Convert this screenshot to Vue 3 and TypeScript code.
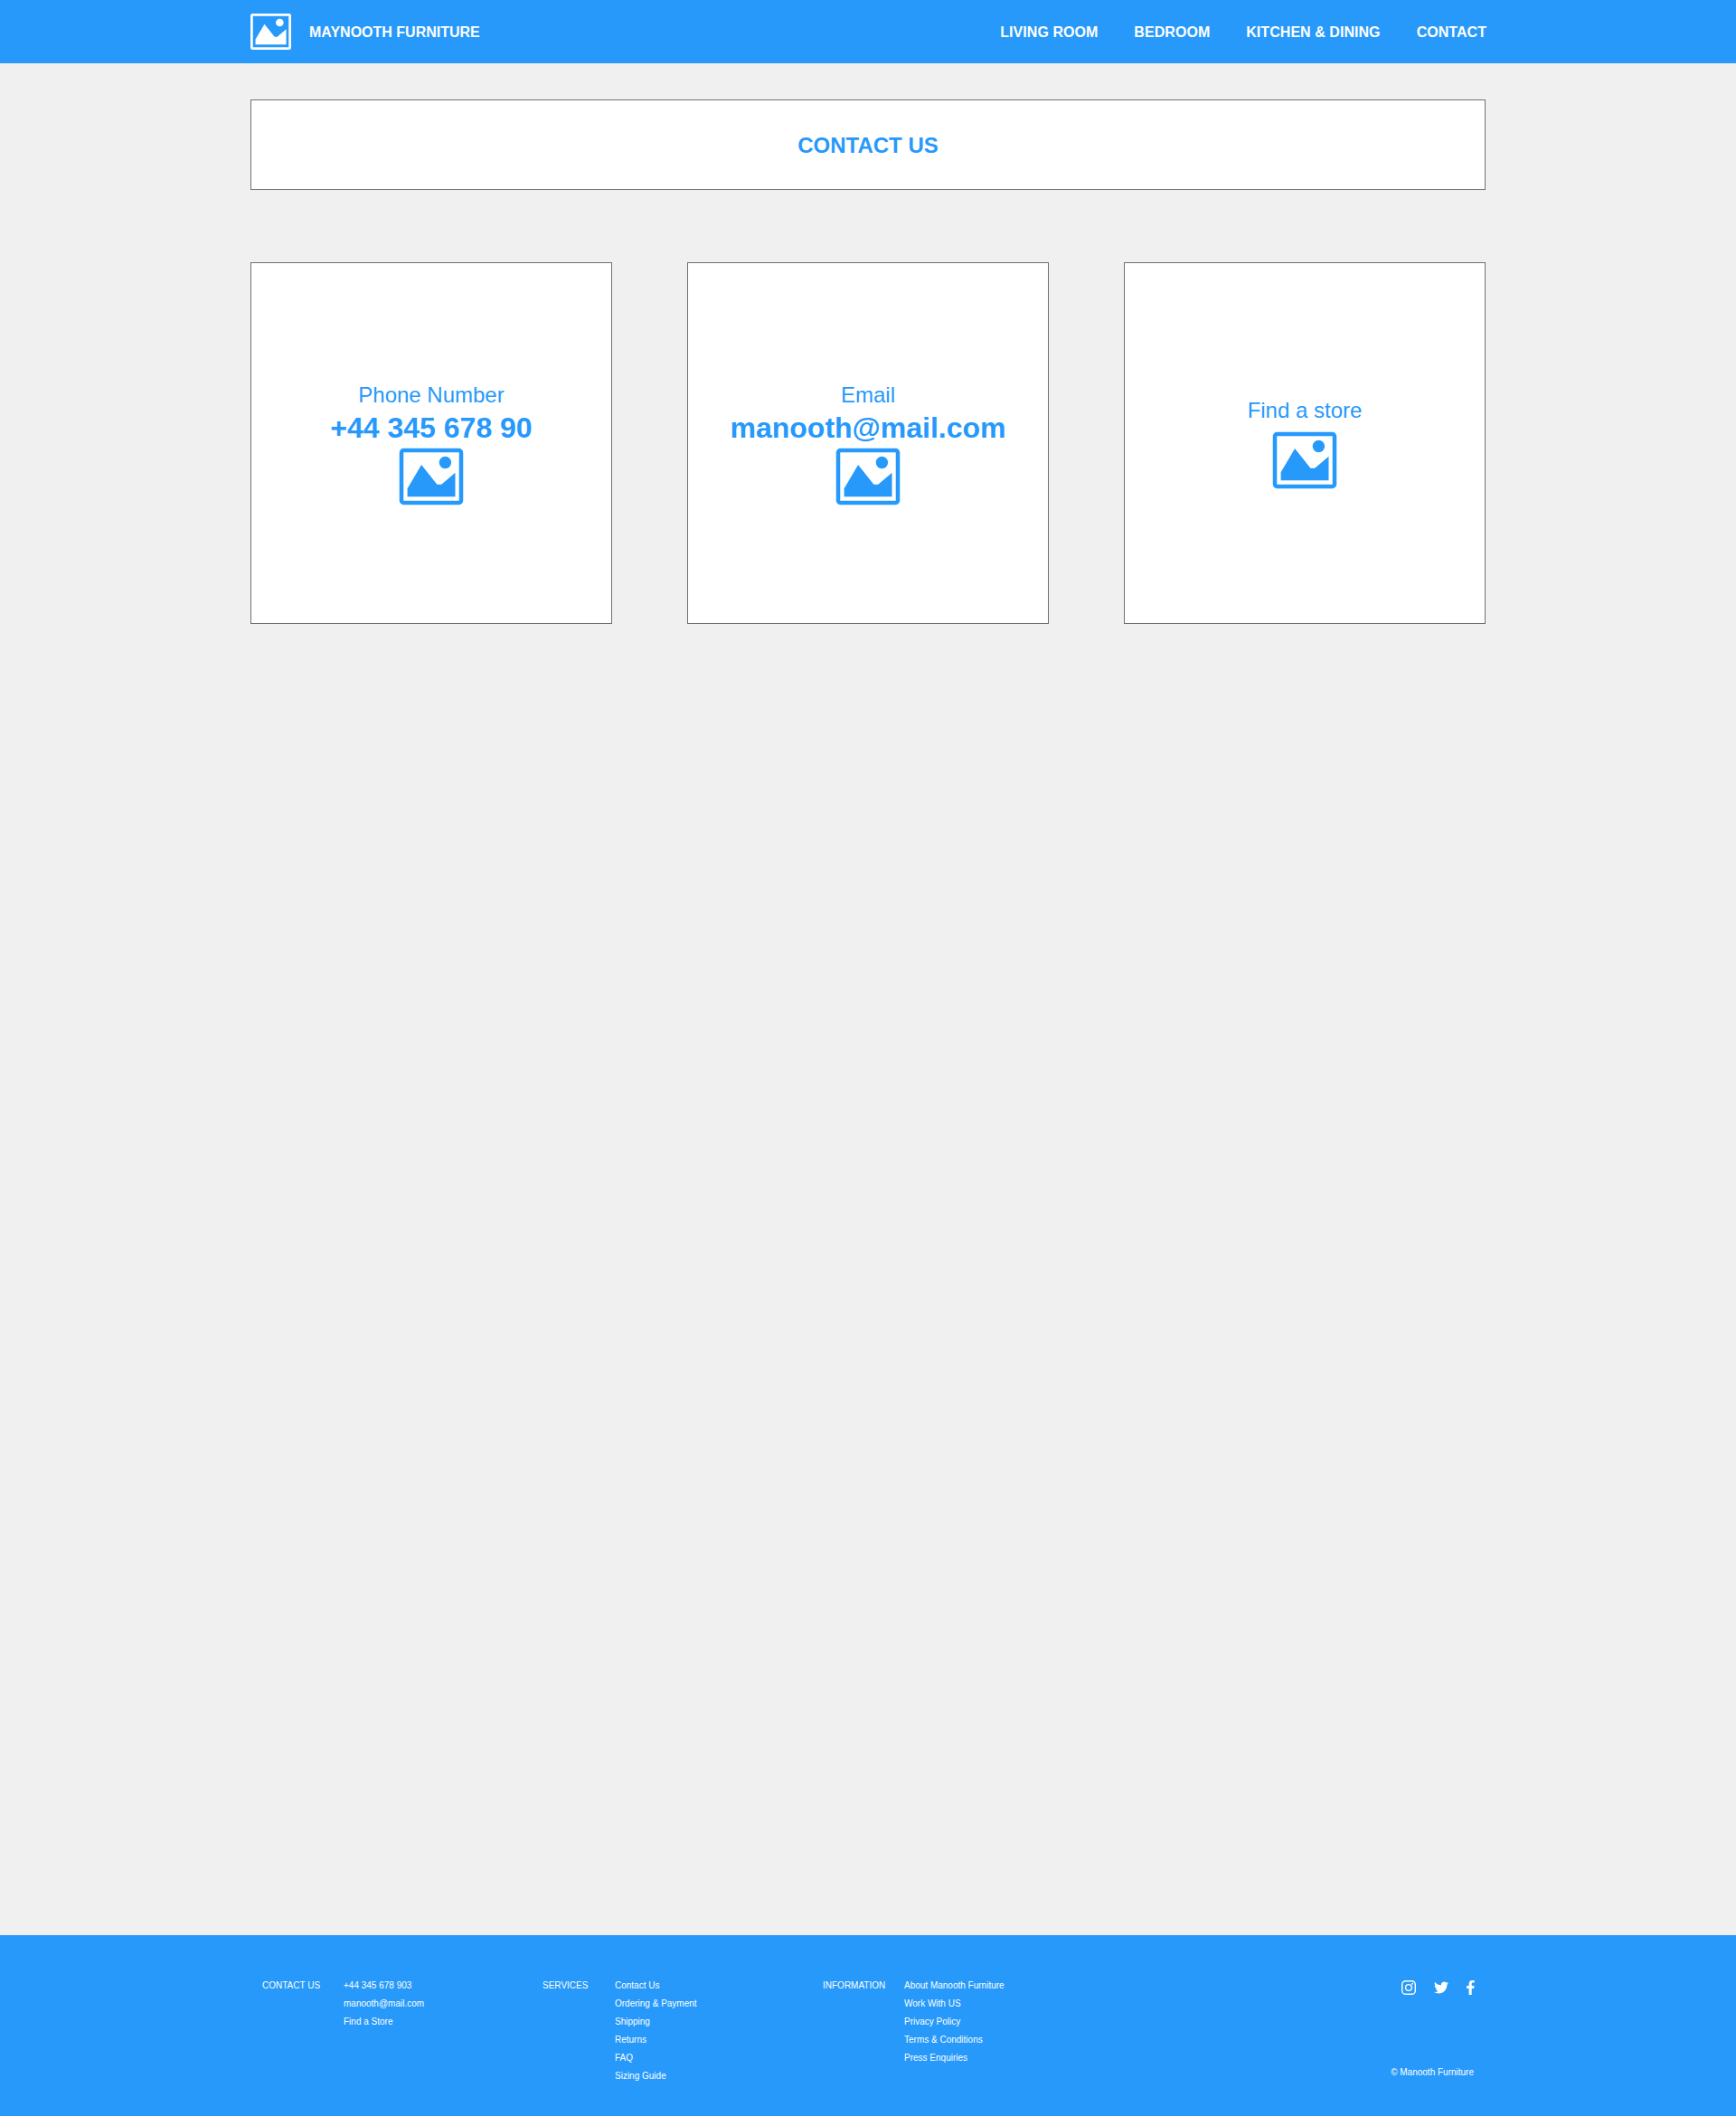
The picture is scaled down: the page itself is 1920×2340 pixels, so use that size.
<script setup lang="ts">
import { h } from 'vue'

interface ContactCard {
  label: string
  value?: string
}

interface FooterColumn {
  title: string
  key: string
  links: string[]
}

const PictureIcon = () =>
  h('svg', { viewBox: '0 0 70 62', fill: 'currentColor', 'aria-hidden': 'true' }, [
    h('rect', { x: 2, y: 2.1, width: 66, height: 57.8, rx: 2.4, fill: 'none', stroke: 'currentColor', 'stroke-width': 4.5 }),
    h('circle', { cx: 50.4, cy: 15.5, r: 6.7 }),
    h('path', { d: 'M8.6 53.2V44.3L24.1 18L41 39.2Q41.4 39.8 42.1 39.8H45.4Q46 39.8 46.5 39.4L61.5 26.8V53.2Z' }),
  ])

const nav: string[] = ['LIVING ROOM', 'BEDROOM', 'KITCHEN & DINING', 'CONTACT']

const cards: ContactCard[] = [
  { label: 'Phone Number', value: '+44 345 678 90' },
  { label: 'Email', value: 'manooth@mail.com' },
  { label: 'Find a store' },
]

const columns: FooterColumn[] = [
  { title: 'CONTACT US', key: 'contact', links: ['+44 345 678 903', 'manooth@mail.com', 'Find a Store'] },
  {
    title: 'SERVICES',
    key: 'services',
    links: ['Contact Us', 'Ordering & Payment', 'Shipping', 'Returns', 'FAQ', 'Sizing Guide'],
  },
  {
    title: 'INFORMATION',
    key: 'information',
    links: ['About Manooth Furniture', 'Work With US', 'Privacy Policy', 'Terms & Conditions', 'Press Enquiries'],
  },
]
</script>

<template>
  <div class="page">
    <header class="topbar">
      <div class="brand">
        <PictureIcon class="logo" />
        <span class="brand-name">MAYNOOTH FURNITURE</span>
      </div>
      <nav class="nav">
        <a v-for="item in nav" :key="item">{{ item }}</a>
      </nav>
    </header>

    <main class="content">
      <h1 class="title">CONTACT US</h1>
      <section class="cards">
        <article v-for="card in cards" :key="card.label" class="card" :class="{ short: !card.value }">
          <p class="label">{{ card.label }}</p>
          <p v-if="card.value" class="value">{{ card.value }}</p>
          <PictureIcon class="picture" />
        </article>
      </section>
    </main>

    <footer class="footer">
      <div v-for="col in columns" :key="col.key" class="column" :class="col.key">
        <span class="heading">{{ col.title }}</span>
        <ul class="links">
          <li v-for="link in col.links" :key="link">{{ link }}</li>
        </ul>
      </div>
      <div class="side">
        <div class="social">
          <svg width="16" height="16" viewBox="0 0 16 16" fill="none" stroke="currentColor">
            <rect x="0.7" y="0.7" width="14.6" height="14.6" rx="3.9" stroke-width="1.4" />
            <circle cx="8" cy="8" r="3.4" stroke-width="1.4" />
            <circle cx="12.2" cy="3.8" r="0.95" fill="currentColor" stroke="none" />
          </svg>
          <svg class="twitter" width="16" height="16" viewBox="0 0 24 24" fill="currentColor">
            <path
              d="M23.95 4.57a10 10 0 0 1-2.82.77 4.96 4.96 0 0 0 2.16-2.72c-.95.55-2 .95-3.13 1.18a4.92 4.92 0 0 0-8.38 4.48C7.69 8.09 4.07 6.13 1.64 3.16a4.82 4.82 0 0 0-.67 2.48c0 1.71.87 3.21 2.19 4.1a4.9 4.9 0 0 1-2.23-.62v.06a4.92 4.92 0 0 0 3.95 4.83 5 5 0 0 1-2.21.08 4.94 4.94 0 0 0 4.6 3.42A9.87 9.87 0 0 1 0 19.54a13.99 13.99 0 0 0 7.55 2.21c9.05 0 14-7.5 14-13.98 0-.21 0-.42-.02-.63a9.94 9.94 0 0 0 2.46-2.55z"
            />
          </svg>
          <svg width="9" height="16" viewBox="0 0 9 16" fill="currentColor">
            <path d="M2.6 16V8.9H0.1V6.1H2.6V3.9C2.6 1.4 4.1 0 6.4 0H8.7V2.6H7.2C6 2.6 5.7 3.2 5.7 4.1V6.1H8.5L8.1 8.9H5.7V16Z" />
          </svg>
        </div>
        <span class="copyright">© Manooth Furniture</span>
      </div>
    </footer>
  </div>
</template>

<style>
body {
  margin: 0;
}
</style>

<style scoped>
.page {
  display: flex;
  flex-direction: column;
  width: 1920px;
  height: 2340px;
  background: #f0f0f0;
  color: #2699fb;
  font-family: 'Liberation Sans', Arial, sans-serif;
}

.topbar {
  display: flex;
  justify-content: space-between;
  align-items: center;
  box-sizing: border-box;
  height: 70px;
  padding: 0 276px 0 277px;
  background: #2699fb;
  color: #fff;
  font-size: 16px;
  font-weight: 700;
  line-height: 18px;
  white-space: nowrap;
}

.brand {
  display: flex;
  align-items: center;
  gap: 20px;
}

.logo {
  width: 45px;
  height: 40px;
}

.brand-name,
.nav {
  padding-top: 2px;
}

.nav {
  display: flex;
  gap: 40px;
  letter-spacing: 0.05px;
}

.content {
  flex: 1;
  padding: 40px 277px 0;
}

.title {
  box-sizing: border-box;
  height: 100px;
  margin: 0;
  border: 1px solid #707070;
  background: #fff;
  font-size: 24px;
  line-height: 100px;
  text-align: center;
}

.cards {
  display: flex;
  justify-content: space-between;
  margin-top: 80px;
}

.card {
  display: flex;
  flex-direction: column;
  align-items: center;
  box-sizing: border-box;
  width: 400px;
  height: 400px;
  padding-top: 132px;
  border: 1px solid #707070;
  background: #fff;
}

.card.short {
  padding-top: 149px;
}

.label {
  margin: 0;
  font-size: 24px;
  line-height: 27px;
}

.value {
  margin: 5px 0 0;
  font-size: 32px;
  font-weight: 700;
  line-height: 37px;
}

.picture {
  width: 70px;
  height: 62px;
  margin-top: 4px;
  overflow: visible;
}

.short .picture {
  margin-top: 11px;
}

.footer {
  display: flex;
  box-sizing: border-box;
  height: 200px;
  padding: 46px 289px 0 290px;
  background: #2699fb;
  color: #fff;
  font-size: 10px;
  line-height: 20px;
  white-space: nowrap;
}

.column {
  display: flex;
  width: 310px;
}

.heading {
  width: 90px;
}

.services .heading {
  width: 80px;
}

.links {
  margin: 0;
  padding: 0;
  list-style: none;
}

.side {
  display: flex;
  flex-direction: column;
  align-items: flex-end;
  margin-left: auto;
  padding-top: 4px;
}

.social {
  display: flex;
  gap: 20px;
}

.copyright {
  margin: 76px 1px 0 0;
}
</style>
